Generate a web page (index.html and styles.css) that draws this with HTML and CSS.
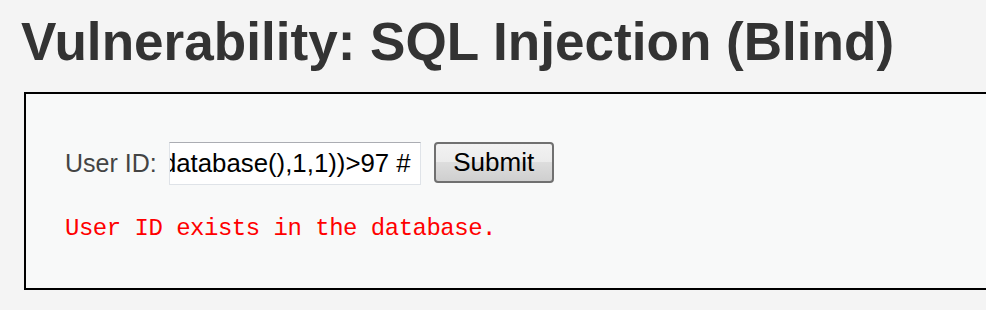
FILE: index.html
```html
<!DOCTYPE html>
<html>
<head>
<meta charset="utf-8">
<link rel="stylesheet" href="styles.css">
</head>
<body>
<div class="page">
  <h1 class="title">Vulnerability: SQL Injection (Blind)</h1>
  <div class="code-area">
    <form class="form-row">
      <span class="label">User ID:</span>
      <div class="field"><span class="field-text">database(),1,1))&gt;97 #</span></div>
      <button type="button" class="submit">Submit</button>
    </form>
    <pre class="result">User ID exists in the database.</pre>
  </div>
</div>
</body>
</html>
```

FILE: styles.css
```css
html, body {
  margin: 0;
  padding: 0;
  background: #f4f4f4;
  overflow: hidden;
}
.page {
  padding: 10px 0 0 21px;
  width: 1200px;
}
.title {
  margin: 0 0 18px 0;
  font-family: "Liberation Sans", Arial, sans-serif;
  font-weight: bold;
  font-size: 53.1px;
  line-height: 64px;
  color: #333333;
}
.code-area {
  margin-left: 3px;
  width: 1100px;
  height: 146px;
  border: 2px solid #000;
  background: #f8f9f9;
  padding: 48px 0 0 39px;
  box-sizing: content-box;
}
.form-row {
  display: flex;
  align-items: center;
  margin: 0;
}
.label {
  font-family: "Liberation Sans", Arial, sans-serif;
  font-size: 25px;
  color: #444;
  margin-right: 12px;
}
.field {
  width: 252px;
  height: 43px;
  box-sizing: border-box;
  border: 1px solid #dfe3e8;
  border-top-color: #abadb3;
  background: #fff;
  display: flex;
  align-items: center;
  justify-content: flex-end;
  overflow: hidden;
  padding-right: 9px;
  white-space: nowrap;
  margin-right: 13px;
}
.field-text {
  font-family: "Liberation Sans", Arial, sans-serif;
  font-size: 25.8px;
  color: #000;
}
.submit {
  width: 120px;
  height: 41px;
  margin-top: -2px;
  box-sizing: border-box;
  border: 2px solid #707070;
  border-radius: 4px;
  background: linear-gradient(#f2f2f2 0%, #ebebeb 50%, #dddddd 50%, #cfcfcf 100%);
  font-family: "Liberation Sans", Arial, sans-serif;
  font-size: 26px;
  color: #000;
  padding: 0;
}
.result {
  margin: 30px 0 0 0;
  font-family: "Liberation Mono", "Courier New", monospace;
  font-size: 24px;
  line-height: 28px;
  letter-spacing: -0.5px;
  color: #ff0000;
}
```
